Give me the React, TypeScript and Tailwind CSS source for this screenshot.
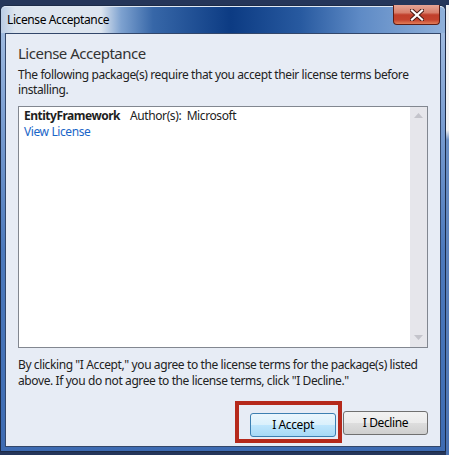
export default function App() {
  return (
    <div className="w-[449px] h-[455px] bg-[#25365a] flex overflow-hidden font-['Noto_Sans',sans-serif] text-[#1e1e1e] tracking-[-0.4px]">
      <div className="mt-[5px] w-[446px] h-[447px] shrink-0 rounded-t-[6px] border border-[#1c2b47] bg-[linear-gradient(to_bottom,#a9c2e3_0%,#7c9fd2_25%,#4c79bc_55%,#3d6bb2_100%)] flex flex-col relative">
        <div className="h-[27px] shrink-0 rounded-t-[5px] border-t border-[#dfe8f4] bg-[linear-gradient(to_right,#b9cce5_0px,#dde5ef_14px,#dde5ef_100px,#7ea2d0_120px,#3767a8_152px,#0c3b83_230px,#285aa0_300px,#5f8bc6_360px,#90b1da_446px)] flex items-center pl-[6px]">
          <span className="text-[12px] leading-[15px] text-black -mt-[1px]">License Acceptance</span>
        </div>
        <div className="absolute right-[5px] -top-[1px] w-[47px] h-[20px] rounded-b-[4px] border border-t-0 border-[#5e1d14] bg-[linear-gradient(to_bottom,#e6a596_0%,#d8806c_40%,#c13f2b_52%,#c4432d_78%,#e27d58_100%)] flex items-center justify-center">
          <svg width="14" height="12" viewBox="0 0 14 12">
            <path d="M2 1.5 L12 10.5 M12 1.5 L2 10.5" stroke="#4a1a14" strokeWidth="4.2" strokeLinecap="square" />
            <path d="M2 1.5 L12 10.5 M12 1.5 L2 10.5" stroke="#ffffff" strokeWidth="2.2" strokeLinecap="square" />
          </svg>
        </div>
        <div className="mx-[4px] h-[414px] shrink-0 border border-[#33476a] bg-[#e7ecf5] px-[12px] flex flex-col">
          <div className="mt-[8px] text-[15px] leading-[22px] tracking-[-0.5px] text-[#333333]">License Acceptance</div>
          <p className="mt-[3px] text-[12px] leading-[15px] text-[#222222]">
            The following package(s) require that you accept their license terms before installing.
          </p>
          <div className="mt-[9px] h-[242px] shrink-0 border border-[#828790] bg-white flex">
            <div className="flex-1 pl-[5px] pt-[1px] text-[12px] leading-[16px]">
              <div className="flex">
                <span className="font-bold tracking-[-0.5px] text-[#1e1e1e]">EntityFramework</span>
                <span className="ml-[10px] text-[#222222] whitespace-pre">Author(s):  Microsoft</span>
              </div>
              <div className="text-[#1a66c8]">View License</div>
            </div>
            <div className="w-[17px] bg-[#e6e6eb] flex flex-col items-center justify-between pt-[6px] pb-[7px]">
              <svg width="9" height="5" viewBox="0 0 9 5"><path d="M0 5 L4.5 0 L9 5 Z" fill="#c4c4cb" /></svg>
              <svg width="9" height="5" viewBox="0 0 9 5"><path d="M0 0 L4.5 5 L9 0 Z" fill="#c4c4cb" /></svg>
            </div>
          </div>
          <p className="mt-[9px] text-[12px] leading-[16px] text-[#222222]">
            By clicking "I Accept," you agree to the license terms for the package(s) listed above. If you do not agree to the license terms, click "I Decline."
          </p>
          <div className="mt-[22px] flex justify-end gap-[7px]">
            <div className="relative w-[86px] h-[24px]">
              <div className="absolute -left-[15px] -right-[6px] -top-[10px] -bottom-[8px] border-[4px] border-[#b5291b]" />
              <button className="relative w-full h-full rounded-[3px] border border-[#3c7fb1] bg-[linear-gradient(to_bottom,#eaf6fd_0%,#d9f0fc_50%,#bee6fd_51%,#a7d9f5_100%)] text-[12px] text-black">
                I Accept
              </button>
            </div>
            <button className="w-[85px] h-[24px] rounded-[3px] border border-[#707070] bg-[linear-gradient(to_bottom,#f2f2f2_0%,#ebebeb_50%,#dddddd_51%,#cfcfcf_100%)] text-[12px] text-black">
              I Decline
            </button>
          </div>
        </div>
      </div>
      <div className="w-[3px] h-full shrink-0 bg-[linear-gradient(to_bottom,#25365a_0px,#25365a_5px,#f2f2f2_5px,#f2f2f2_130px,#6b8fc4_140px,#4a72b2_100%)]" />
    </div>
  );
}
